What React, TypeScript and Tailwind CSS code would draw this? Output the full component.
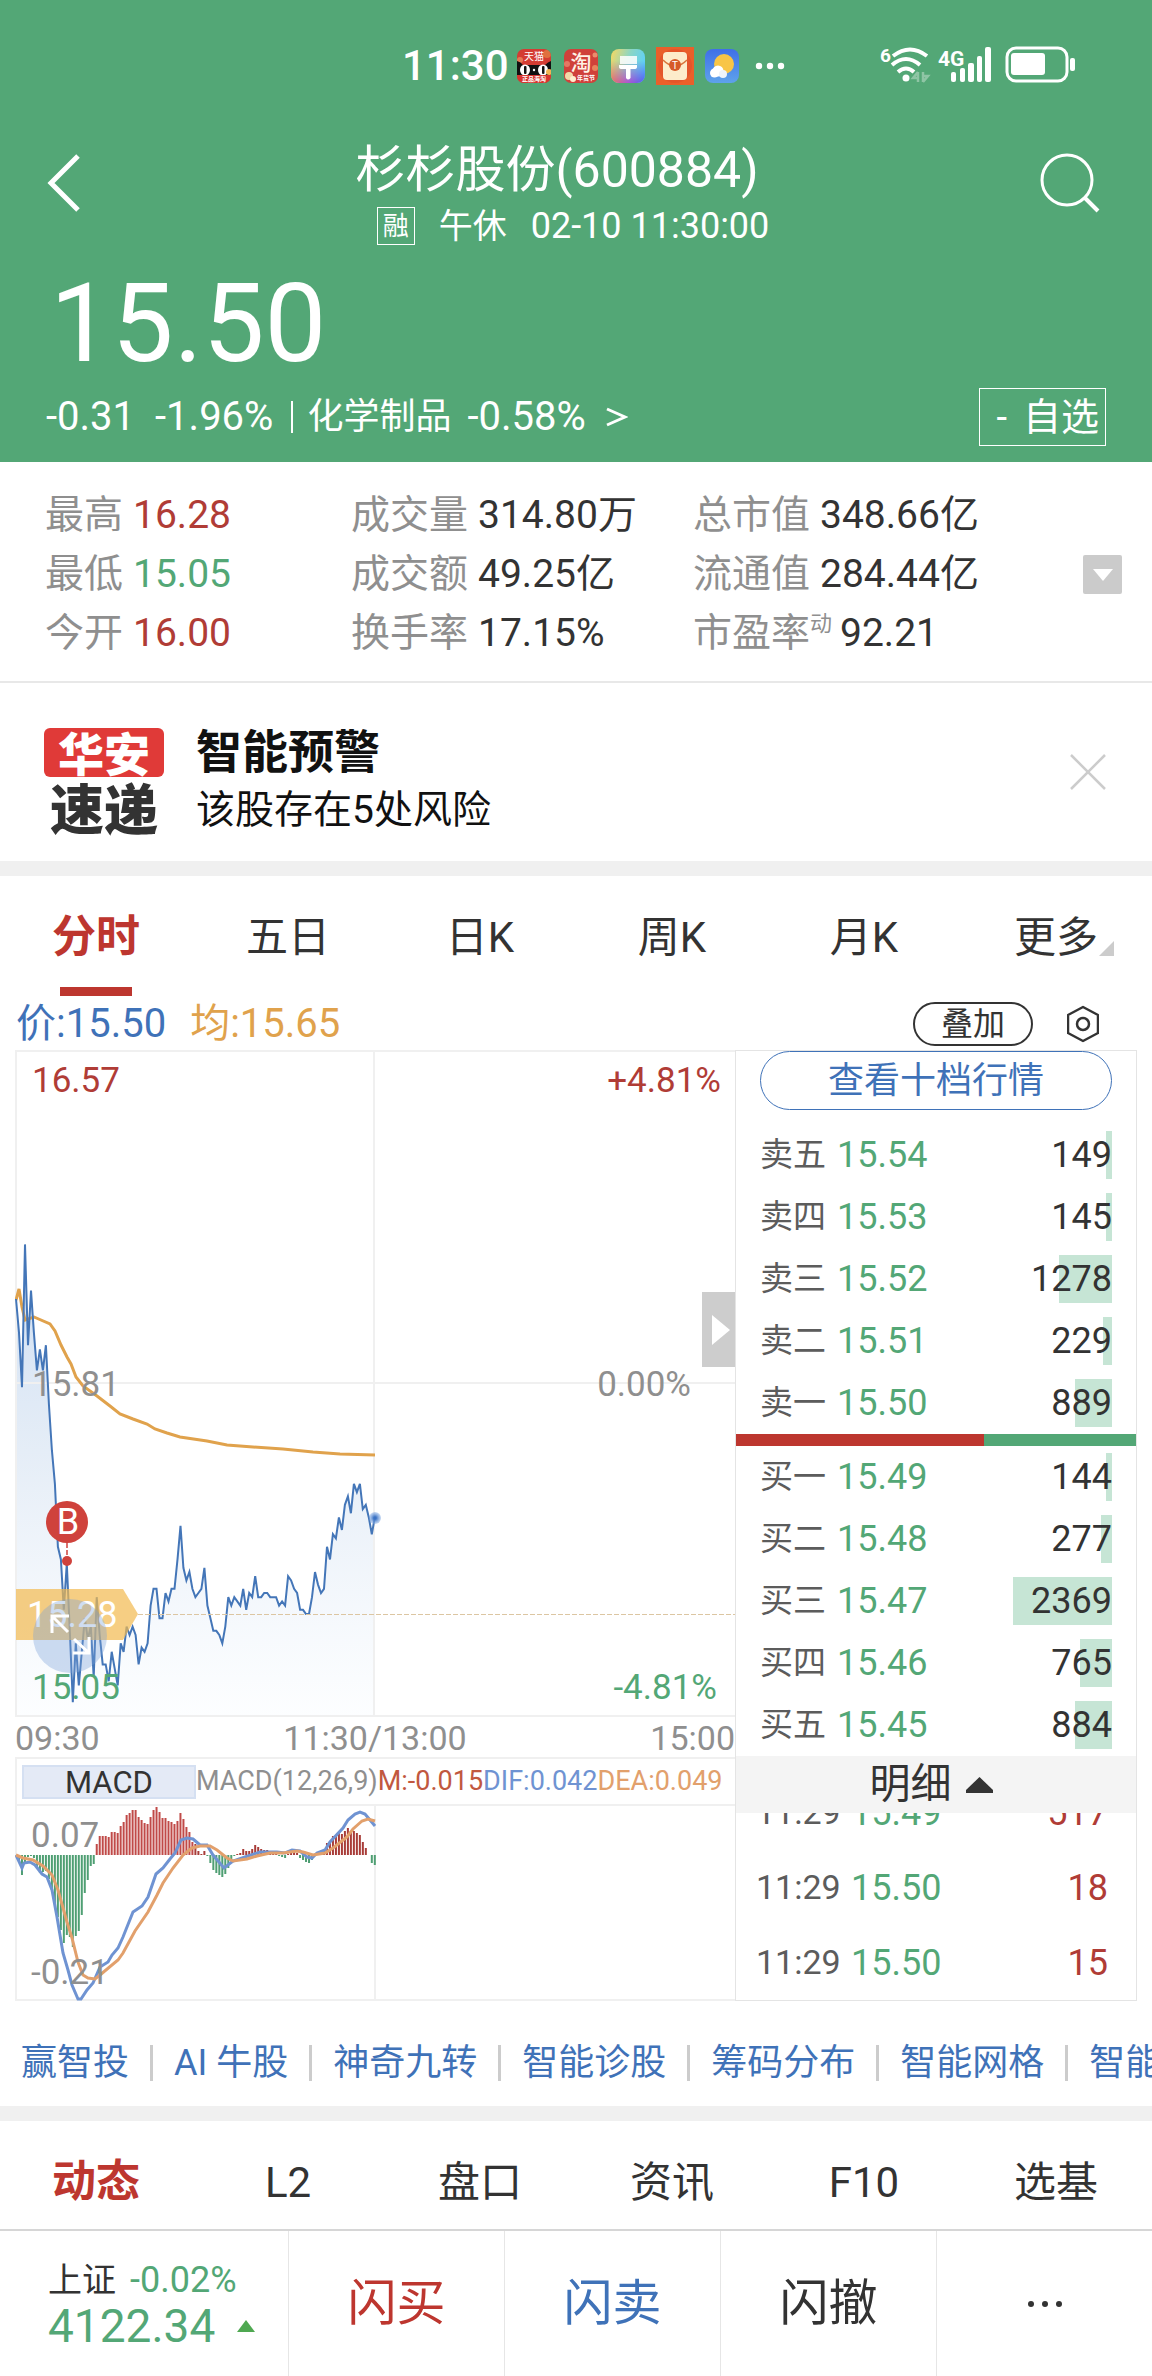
import type { FC, ReactNode } from 'react';

type Level = { label: string; price: string; qty: number; bar: number };

// one price per minute, in cents
const PRICES = [
  1601, 1593, 1580, 1614, 1590, 1603, 1593, 1584, 1589, 1584, 1590, 1576, 1565, 1557, 1542, 1539, 1527, 1538, 1522, 1505,
  1519, 1509, 1517, 1525, 1520, 1523, 1511, 1530, 1521, 1514, 1514, 1510, 1517, 1513, 1509, 1519, 1517, 1523, 1521, 1523,
  1521, 1514, 1518, 1517, 1519, 1528, 1532, 1532, 1525, 1525, 1531, 1529, 1532, 1532, 1539, 1547, 1537, 1534, 1536, 1532,
  1530, 1531, 1532, 1537, 1528, 1525, 1522, 1522, 1521, 1519, 1523, 1530, 1528, 1530, 1529, 1528, 1532, 1527, 1531, 1530,
  1535, 1530, 1530, 1531, 1531, 1530, 1530, 1530, 1528, 1529, 1528, 1535, 1534, 1532, 1531, 1527, 1527, 1526, 1526, 1530,
  1536, 1533, 1531, 1532, 1542, 1539, 1545, 1544, 1549, 1546, 1552, 1554, 1550, 1557, 1555, 1557, 1551, 1552, 1549, 1545,
  1549,
];

const AVERAGE =
  '1,250 4,239 7,257 10,270 19,267 35,274 40,281 46,295 52,307 56,314 61,327 68,336 82,346 95,356 105,364 118,369 132,374 140,379 152,383 165,387 192,391 212,395 238,397 268,399 298,402 325,404 360,405';

const HISTOGRAM = [
  0, -5, -20, -8, -2, -1, -3, -12, -18, -17, -16, -24, -35, -48, -62, -75, -88, -80, -82, -92, -81, -76, -60, -38, -25,
  -11, -9, 11, 19, 19, 19, 18, 23, 23, 22, 29, 33, 40, 42, 45, 45, 38, 35, 32, 31, 38, 45, 48, 43, 37, 37, 34, 33, 31,
  34, 42, 36, 28, 23, 13, 11, 4, 1, 4, -1, -8, -15, -18, -20, -22, -19, -13, -6, -1, 1, 2, 6, 4, 4, 6, 10, 8, 6, 5, 5,
  4, 3, 1, -1, -2, -3, 1, 3, 4, 2, -3, -5, -7, -8, -5, 0, 2, 3, 5, 12, 14, 19, 20, 23, 21, 24, 27, 24, 24, 22, 20, 13,
  7, 0, -8, -10,
];

const DIF =
  '1,49 7,62 9,57 15,56 20,59 27,68 32,71 37,84 42,111 48,147 53,164 57,179 63,193 66,193 72,184 78,177 85,161 93,156 97,149 103,142 108,131 118,106 127,100 133,91 141,68 148,62 155,53 160,47 166,34 172,32 178,33 185,39 192,39 198,49 209,62 218,55 230,51 245,46 262,46 270,47 277,44 285,45 292,51 297,52 302,47 310,44 315,36 328,22 333,14 340,8 345,6 350,8 355,14 360,20';

const DEA =
  '1,49 8,52 18,54 28,60 37,69 43,84 52,116 57,132 63,156 68,169 73,172 80,173 85,169 103,154 108,147 120,125 133,106 142,89 148,77 158,62 168,49 177,42 185,40 195,40 202,44 212,52 218,55 232,53 242,50 255,47 268,47 282,45 288,46 298,49 310,47 318,42 332,31 338,23 347,15 353,13 360,15';

const minuteX = (i: number) => 1 + i * 2.99;
const priceY = (cents: number) => 333 + (1581 - cents) * 4.2;
const PRICE_POINTS = PRICES.map((p, i) => `${minuteX(i).toFixed(1)},${priceY(p).toFixed(1)}`).join(' ');

const SELL: Level[] = [
  { label: '卖五', price: '15.54', qty: 149, bar: 6 },
  { label: '卖四', price: '15.53', qty: 145, bar: 6 },
  { label: '卖三', price: '15.52', qty: 1278, bar: 53 },
  { label: '卖二', price: '15.51', qty: 229, bar: 9 },
  { label: '卖一', price: '15.50', qty: 889, bar: 37 },
];

const BUY: Level[] = [
  { label: '买一', price: '15.49', qty: 144, bar: 6 },
  { label: '买二', price: '15.48', qty: 277, bar: 11 },
  { label: '买三', price: '15.47', qty: 2369, bar: 99 },
  { label: '买四', price: '15.46', qty: 765, bar: 32 },
  { label: '买五', price: '15.45', qty: 884, bar: 37 },
];

const TICKS = [
  { time: '11:29', price: '15.49', qty: 517 },
  { time: '11:29', price: '15.50', qty: 18 },
  { time: '11:29', price: '15.50', qty: 15 },
];

const LINKS = ['赢智投', 'AI 牛股', '神奇九转', '智能诊股', '筹码分布', '智能网格', '智能'];

const StatusBar: FC = () => (
  <div className="flex h-[132px] items-center pl-[402px] pr-[76px]">
    <span className="text-[42px] font-medium leading-[44px]">11:30</span>
    <div className="ml-2 flex items-center gap-[13px]">
      <svg className="size-[34px]" viewBox="0 0 34 34">
        <defs>
          <clipPath id="tm"><rect width="34" height="34" rx="7" /></clipPath>
        </defs>
        <g clipPath="url(#tm)">
          <rect width="34" height="34" fill="#d43c33" />
          <circle cx="30" cy="5" r="4" fill="#e0703f" />
          <circle cx="3" cy="11" r="3" fill="#e67a55" />
          <path d="M0 12 Q4 13 6 16 H28 Q31 13 34 12 V26 H0Z" fill="#111" />
          <ellipse cx="8" cy="21" rx="5" ry="5.5" fill="#fff" />
          <ellipse cx="26" cy="21" rx="5" ry="5.5" fill="#fff" />
          <rect x="7" y="17" width="2.5" height="8" rx="1" fill="#111" />
          <rect x="25" y="17" width="2.5" height="8" rx="1" fill="#111" />
          <circle cx="17" cy="21" r="1.2" fill="#fff" />
          <circle cx="32" cy="23" r="3" fill="#f2b452" />
          <rect y="26" width="34" height="8" fill="#d8352f" />
          <text x="17" y="11" fontSize="10" fill="#fff" textAnchor="middle">天猫</text>
          <text x="17" y="32" fontSize="6" fontWeight="700" fill="#fff" textAnchor="middle">正品海淘</text>
        </g>
      </svg>
      <svg className="size-[34px]" viewBox="0 0 34 34">
        <rect width="34" height="34" rx="7" fill="#d0413a" />
        <circle cx="3" cy="15" r="3" fill="#e57763" />
        <circle cx="31" cy="6" r="2.5" fill="#ea8d6c" />
        <circle cx="31" cy="19" r="3" fill="#e8835c" />
        <text x="17" y="21" fontSize="21" fontWeight="500" fill="#fff3e6" textAnchor="middle">淘</text>
        <circle cx="5" cy="27" r="4" fill="#f4d9a8" />
        <circle cx="9" cy="30" r="3" fill="#fff0cf" />
        <text x="22" y="31" fontSize="6" fontWeight="700" fill="#fff" textAnchor="middle">年货节</text>
      </svg>
      <svg className="size-[34px]" viewBox="0 0 34 34">
        <defs>
          <linearGradient id="br1" x1="0" y1="0.2" x2="1" y2="0.5">
            <stop offset="0" stopColor="#eed869" />
            <stop offset="0.5" stopColor="#8bd6c4" />
            <stop offset="1" stopColor="#5cd0fa" />
          </linearGradient>
          <linearGradient id="br2" x1="0" y1="0" x2="1" y2="0">
            <stop offset="0" stopColor="#ec6a62" />
            <stop offset="0.5" stopColor="#b054d0" />
            <stop offset="1" stopColor="#4f5cf2" />
          </linearGradient>
          <linearGradient id="br3" x1="0" y1="0" x2="0" y2="1">
            <stop offset="0.35" stopColor="#fff" stopOpacity="0" />
            <stop offset="1" stopColor="#fff" />
          </linearGradient>
          <mask id="brm"><rect width="34" height="34" fill="url(#br3)" /></mask>
        </defs>
        <rect width="34" height="34" rx="8" fill="url(#br1)" />
        <rect width="34" height="34" rx="8" fill="url(#br2)" mask="url(#brm)" />
        <path d="M9 7 H26 V15 H9Z" fill="#fff" opacity="0.85" />
        <path d="M8 16 H26 V18 Q26 20 23 20 H19.5 V29 Q17 32 15 29 V20 H11 Q8 20 8 18Z" fill="#fff" />
      </svg>
      <svg className="-mx-0.5 size-[38px]" viewBox="0 0 38 38">
        <rect width="38" height="38" fill="#ea5f2a" />
        <circle cx="19" cy="19" r="17" fill="#e4552a" />
        <rect x="7" y="5" width="24" height="28" rx="4" fill="#fdeccb" />
        <path d="M7 13 Q13 19 19 19 Q25 19 31 13" fill="none" stroke="#d9743a" strokeWidth="1.5" />
        <circle cx="19" cy="18" r="6" fill="#d65a28" />
        <text x="19" y="22" fontSize="10" fill="#fff" textAnchor="middle">T</text>
      </svg>
      <svg className="size-[34px]" viewBox="0 0 34 34">
        <defs>
          <linearGradient id="wt" x1="0" y1="0" x2="0" y2="1">
            <stop offset="0" stopColor="#3f6fe8" />
            <stop offset="1" stopColor="#5ea2ea" />
          </linearGradient>
        </defs>
        <rect width="34" height="34" rx="8" fill="url(#wt)" />
        <circle cx="19" cy="15" r="10" fill="#f8c546" />
        <circle cx="13" cy="22" r="5.5" fill="#fff" />
        <circle cx="9.5" cy="24" r="4.5" fill="#fff" />
        <circle cx="18" cy="25" r="4" fill="#eef4fb" />
      </svg>
      <svg className="h-2 w-[34px]" viewBox="0 0 34 8" fill="#fff">
        <circle cx="7" cy="4" r="3.2" />
        <circle cx="18" cy="4" r="3.2" />
        <circle cx="29" cy="4" r="3.2" />
      </svg>
    </div>
    <svg className="ml-auto h-10 w-[196px]" viewBox="0 0 196 40" fill="none" stroke="#fff">
      <text x="0" y="16" fontSize="19" fontWeight="700" fill="#fff" stroke="none">6</text>
      <path d="M13 10 Q30 -3 47 10" strokeWidth="4" />
      <path d="M12 19 Q26 7 40 19" strokeWidth="4" />
      <path d="M18 26 Q26 19 34 26" strokeWidth="4" />
      <circle cx="26" cy="32" r="3.5" fill="#fff" stroke="none" />
      <path d="M38 26 V36 M38 26 L33 32 H38 M43 36 V26 M43 36 L48 30 H43" strokeWidth="2.5" opacity="0.35" />
      <text x="58" y="20" fontSize="21" fontWeight="700" fill="#fff" stroke="none">4G</text>
      <g fill="#fff" stroke="none">
        <rect x="71" y="26" width="5" height="10" rx="2" />
        <rect x="80" y="22" width="5" height="14" rx="2" />
        <rect x="88" y="17" width="6" height="19" rx="2" />
        <rect x="97" y="10" width="5" height="26" rx="2" />
        <rect x="105" y="1" width="6" height="35" rx="2" />
        <rect x="131" y="7" width="34" height="22" rx="3" />
        <rect x="190" y="12" width="5" height="13" rx="2" />
      </g>
      <rect x="127" y="2" width="60" height="33" rx="9" strokeWidth="3" />
    </svg>
  </div>
);

const Header: FC = () => (
  <header className="bg-[#53a776] pb-4 text-white">
    <StatusBar />
    <div className="flex items-start justify-between pl-[46px] pr-[52px] pt-1.5">
      <button type="button" aria-label="返回" className="flex h-[90px] w-[60px] items-center">
        <svg className="h-[58px] w-9" viewBox="0 0 36 58" fill="none" stroke="currentColor" strokeWidth="5">
          <path d="M32 2 L5 29 L32 56" />
        </svg>
      </button>
      <div className="flex flex-col items-center">
        <h1 className="pr-8 pt-0.5 text-[50px] leading-[60px]">杉杉股份(600884)</h1>
        <div className="mt-1 flex items-center text-[36px] leading-[44px]">
          <span className="flex size-[38px] items-center justify-center border border-white text-[26px]">融</span>
          <span className="ml-6 text-[34px]">午休</span>
          <span className="ml-6">02-10 11:30:00</span>
        </div>
      </div>
      <button type="button" aria-label="搜索" className="flex h-[90px] w-[60px] items-center">
        <svg className="size-[60px]" viewBox="0 0 60 60" fill="none" stroke="currentColor" strokeWidth="3">
          <circle cx="27" cy="27" r="25" />
          <path d="M45 45 L58 58" strokeWidth="4" />
        </svg>
      </button>
    </div>
    <p className="mt-4 pl-[50px] text-[110px] leading-[120px]">15.50</p>
    <div className="mt-1 flex h-[58px] items-center justify-between px-[46px] text-[40px]">
      <a href="#sector" className="flex items-center">
        <span>-0.31</span>
        <span className="ml-5">-1.96%</span>
        <span className="ml-[18px] h-8 w-0.5 bg-white" />
        <span className="ml-3.5 text-[36px]">化学制品</span>
        <span className="ml-4">-0.58%</span>
        <svg className="ml-5 h-5 w-[22px]" viewBox="0 0 22 20" fill="none" stroke="currentColor" strokeWidth="3">
          <path d="M1 2 L19 10 L1 18" />
        </svg>
      </a>
      <button type="button" className="flex h-[58px] items-center gap-4 border border-white pl-4 pr-1.5 text-[38px]">
        <span>-</span>
        <span>自选</span>
      </button>
    </div>
  </header>
);

const Stat: FC<{ label: string; sup?: string; color?: string; children: ReactNode }> = ({ label, sup, color, children }) => (
  <div className="flex">
    <dt className="flex text-[#8f8f8f]">
      {label}
      {sup && <sup className="top-0 text-[22px] leading-[40px]">{sup}</sup>}
    </dt>
    <dd className={`${sup ? 'ml-2' : 'ml-2.5'} ${color ?? 'text-[#333]'}`}>{children}</dd>
  </div>
);

const Stats: FC = () => (
  <section className="flex items-center border-b-2 border-[#e8e8e8] pb-[18px] pl-[45px] pr-[30px] pt-6">
    <dl className="grid flex-1 grid-cols-[306fr_342fr_390fr] text-[39px] leading-[59px]">
      <Stat label="最高" color="text-[#b03c36]">16.28</Stat>
      <Stat label="成交量">314.80万</Stat>
      <Stat label="总市值">348.66亿</Stat>
      <Stat label="最低" color="text-[#53a776]">15.05</Stat>
      <Stat label="成交额">49.25亿</Stat>
      <Stat label="流通值">284.44亿</Stat>
      <Stat label="今开" color="text-[#b03c36]">16.00</Stat>
      <Stat label="换手率">17.15%</Stat>
      <Stat label="市盈率" sup="动">92.21</Stat>
    </dl>
    <button type="button" aria-label="展开" className="flex size-[39px] items-center justify-center rounded-xs bg-[#cbcbcb]">
      <svg className="h-3 w-5" viewBox="0 0 20 12" fill="#fff">
        <path d="M0 0 H20 L10 12Z" />
      </svg>
    </button>
  </section>
);

const Notice: FC = () => (
  <section className="flex items-center pb-[22px] pl-11 pr-[46px] pt-10">
    <div className="flex w-[120px] flex-col items-center font-black text-[#333]">
      <span className="h-[49px] w-full rounded-md bg-[#e03a38] text-center text-[46px] leading-[54px] text-white">华安</span>
      <span className="mt-2 h-[49px] text-[54px] leading-[54px]">速递</span>
    </div>
    <div className="ml-8 flex-1 text-[39px] leading-[58px] text-[#111]">
      <h2 className="text-[46px] font-bold">智能预警</h2>
      <p>该股存在5处风险</p>
    </div>
    <button type="button" aria-label="关闭" className="flex h-[98px] items-center self-start">
      <svg className="size-9" viewBox="0 0 36 36" stroke="#ccc" strokeWidth="2.5">
        <path d="M1 1 L35 35 M35 1 L1 35" />
      </svg>
    </button>
  </section>
);

const PeriodTabs: FC = () => (
  <nav className="grid h-[120px] grid-cols-6 text-[42px] text-[#333]">
    <button type="button" className="relative pt-0.5 text-[44px] font-bold text-[#bd362f]">
      分时
      <span className="absolute bottom-0 left-1/2 h-[9px] w-[72px] -translate-x-1/2 bg-[#bd362f]" />
    </button>
    {['五日', '日K', '周K', '月K'].map((t) => (
      <button type="button" key={t} className="pt-0.5">{t}</button>
    ))}
    <button type="button" className="relative pt-0.5">
      更多
      <svg className="absolute right-[38px] top-[65px] size-[15px]" viewBox="0 0 15 15" fill="#ccc">
        <path d="M15 0 V15 H0Z" />
      </svg>
    </button>
  </nav>
);

const PriceLegend: FC = () => (
  <div className="flex h-[54px] items-center pl-4 pr-[53px] pt-0.5 text-[40px]">
    <span className="text-[#3f72b8]">价:15.50</span>
    <span className="ml-6 text-[#e0a24c]">均:15.65</span>
    <button type="button" className="ml-auto h-11 w-[120px] rounded-full border-2 border-[#333] text-[32px] leading-none text-[#333]">叠加</button>
    <button type="button" aria-label="设置" className="ml-[34px]">
      <svg className="h-[38px] w-8" viewBox="0 0 32 38" fill="none" stroke="#333" strokeWidth="2.5" strokeLinejoin="round">
        <path d="M16 2 L31 10 V28 L16 36 L1 28 V10Z" />
        <circle cx="16" cy="19" r="6" />
      </svg>
    </button>
  </div>
);

const PriceChart: FC = () => (
  <div className="relative h-[667px]">
    <svg className="block h-full w-full" viewBox="0 0 720 667" preserveAspectRatio="none">
      <defs>
        <linearGradient id="area" x1="0" y1="0" x2="0" y2="1">
          <stop offset="0" stopColor="#c9dbf1" stopOpacity="0.9" />
          <stop offset="0.45" stopColor="#dfe9f5" stopOpacity="0.8" />
          <stop offset="1" stopColor="#fbfdff" stopOpacity="0.6" />
        </linearGradient>
        <radialGradient id="glow">
          <stop offset="0.2" stopColor="#3a72c4" />
          <stop offset="1" stopColor="#8db2e6" stopOpacity="0.5" />
        </radialGradient>
      </defs>
      <polygon points={`1,665 ${PRICE_POINTS} 360,665`} fill="url(#area)" />
      <g stroke="#f0f0f0" strokeWidth="2" fill="none">
        <path d="M0 1 H720 M0 333 H720 M0 666 H720 M1 0 V667 M359 0 V667" />
      </g>
      <polyline points={AVERAGE} fill="none" stroke="#e0a24c" strokeWidth="3" />
      <polyline points={PRICE_POINTS} fill="none" stroke="#4476b8" strokeWidth="2" />
      <circle cx="360" cy="468" r="6" fill="url(#glow)" />
      <path d="M123 564.5 H720" stroke="#dcc6a2" strokeWidth="1" strokeDasharray="5 2" />
      <path d="M1 539 H108 L123 564 L108 590 H1Z" fill="#f2b94f" opacity="0.7" />
      <text x="12" y="577" fontSize="36" fill="#fff">15.28</text>
      <circle cx="55" cy="586" r="37" fill="#7ba0d8" opacity="0.36" />
      <g stroke="#fff" strokeWidth="3" fill="none">
        <path d="M54 566 H37 V583 M37 566 L53 582" />
        <path d="M58 603 H74 V587 M74 603 L59 589" />
      </g>
      <path d="M52 493 V508" stroke="#cf423c" strokeWidth="1.5" strokeDasharray="5 2" />
      <circle cx="52" cy="511" r="5" fill="#cf423c" />
      <circle cx="52" cy="472" r="21" fill="#cf423c" />
      <text x="53" y="484" fontSize="36" fill="#fff" textAnchor="middle">B</text>
    </svg>
    <div className="absolute inset-0 flex flex-col justify-between pb-[9px] pl-[17px] pr-3.5 pt-[11px] text-[35px] leading-10">
      <div className="flex justify-between text-[#b03c36]">
        <span>16.57</span>
        <span>+4.81%</span>
      </div>
      <div className="flex justify-between pr-[30px] text-[#8f8f8f]">
        <span>15.81</span>
        <span>0.00%</span>
      </div>
      <div className="flex justify-between pr-1 text-[#53a776]">
        <span>15.05</span>
        <span>-4.81%</span>
      </div>
    </div>
    <button type="button" aria-label="收起盘口" className="absolute right-0 top-[242px] flex h-[75px] w-[33px] items-center justify-center bg-[#cdcdcd] pl-1">
      <svg className="h-[30px] w-[18px]" viewBox="0 0 18 30" fill="#fff">
        <path d="M0 0 L18 15 L0 30Z" />
      </svg>
    </button>
  </div>
);

const MacdChart: FC = () => (
  <>
    <div className="flex h-[49px] items-center border-y-2 border-l-2 border-[#f0f0f0] pl-[5px] text-[27px] leading-none">
      <button type="button" className="h-[34px] w-[174px] border-2 border-[#d5e0f2] bg-[#e4eaf6] text-[31px] leading-none text-[#333]">MACD</button>
      <span className="text-[#8f8f8f]">MACD(12,26,9)</span>
      <span className="text-[#c1583f]">M:-0.015</span>
      <span className="text-[#6f93d2]">DIF:0.042</span>
      <span className="text-[#e2a06c]">DEA:0.049</span>
    </div>
    <div className="relative h-[195px]">
      <svg className="block h-full w-full" viewBox="0 0 720 195" preserveAspectRatio="none">
        <path d="M1 0 V195 M360 0 V195 M0 194 H720" stroke="#f0f0f0" strokeWidth="2" fill="none" />
        {HISTOGRAM.map((v, i) => (
          <rect
            key={i}
            x={minuteX(i) - 1}
            y={v > 0 ? 49 - v : 49}
            width="2"
            height={Math.abs(v)}
            fill={v < 0 ? '#4f9f73' : i < 60 ? '#c04a48' : '#a83c38'}
          />
        ))}
        <polyline points={DIF} fill="none" stroke="#6f93d2" strokeWidth="3" />
        <polyline points={DEA} fill="none" stroke="#e2a06c" strokeWidth="3" />
      </svg>
      <div className="absolute inset-0 flex flex-col justify-between pb-2 pl-4 pt-2.5 text-[35px] leading-10 text-[#8f8f8f]">
        <span>0.07</span>
        <span>-0.21</span>
      </div>
    </div>
  </>
);

const BookTable: FC<{ levels: Level[] }> = ({ levels }) => (
  <table className="w-full text-[36px] leading-[48px]">
    <tbody>
      {levels.map((l) => (
        <tr key={l.label} className="h-[62px]">
          <th scope="row" className="w-[101px] pl-6 text-left text-[33px] font-normal text-[#5c5c5c]">{l.label}</th>
          <td className="text-[#53a776]">{l.price}</td>
          <td className="pr-6 text-right text-[#333]">
            <div className="relative">
              <span className="absolute inset-y-0 right-0 bg-[#c6e5d5]" style={{ width: l.bar }} />
              <span className="relative">{l.qty}</span>
            </div>
          </td>
        </tr>
      ))}
    </tbody>
  </table>
);

const OrderBook: FC = () => (
  <aside className="flex w-[402px] flex-col border border-[#e4e4e4]">
    <button type="button" className="mx-6 h-[59px] rounded-full border border-[#3f72b8] text-[36px] text-[#3f72b8]">查看十档行情</button>
    <div className="mt-3.5">
      <BookTable levels={SELL} />
    </div>
    <div className="flex h-3">
      <span className="w-[62%] bg-[#bd362f]" />
      <span className="flex-1 bg-[#53a776]" />
    </div>
    <BookTable levels={BUY} />
    <button type="button" className="flex h-[57px] shrink-0 items-center justify-center gap-3.5 bg-[#f4f4f4] pr-2.5 text-[41px] text-[#333]">
      明细
      <svg className="h-4 w-[27px]" viewBox="0 0 27 16" fill="#333">
        <path d="M13.5 0 L27 13 V16 H0 V13Z" />
      </svg>
    </button>
    <div className="flex h-0 grow flex-col justify-end overflow-hidden">
      <table className="w-full text-[36px]">
        <tbody>
          {TICKS.map((t, i) => (
            <tr key={i} className="h-[75px]">
              <td className="w-[115px] pl-5 text-[34px] text-[#5c5c5c]">{t.time}</td>
              <td className="text-[#53a776]">{t.price}</td>
              <td className="pr-7 text-right text-[#b03c36]">{t.qty}</td>
            </tr>
          ))}
        </tbody>
      </table>
    </div>
  </aside>
);

const QuickLinks: FC = () => (
  <nav className="flex h-[105px] items-center gap-[21px] overflow-hidden whitespace-nowrap pl-[21px] pt-[18px] text-[36px] text-[#3f72b8]">
    {LINKS.map((l, i) => (
      <div key={l} className="flex shrink-0 items-center gap-[21px]">
        {i > 0 && <span className="h-9 w-[3px] bg-[#ccc]" />}
        <a href={`#${i}`}>{l}</a>
      </div>
    ))}
  </nav>
);

const InfoTabs: FC = () => (
  <nav className="grid h-[108px] grid-cols-6 pt-3.5 text-[42px] text-[#333]">
    <button type="button" className="text-[44px] font-bold text-[#bd362f]">动态</button>
    {['L2', '盘口', '资讯', 'F10', '选基'].map((t) => (
      <button type="button" key={t}>{t}</button>
    ))}
  </nav>
);

const TradeBar: FC = () => (
  <footer className="grid h-[147px] grid-cols-[4fr_3fr_3fr_3fr_3fr] border-t-2 border-[#d6d6d6] text-[49px] text-[#333]">
    <div className="pl-12 pt-7 text-[#53a776]">
      <div className="flex gap-3.5 text-[34px] leading-[42px]">
        <span className="text-[#333]">上证</span>
        <span className="text-[36px]">-0.02%</span>
      </div>
      <div className="flex items-center gap-[22px] text-[46px] leading-[50px]">
        4122.34
        <svg className="h-3 w-[18px]" viewBox="0 0 18 12" fill="#4fa851">
          <path d="M9 0 L18 12 H0Z" />
        </svg>
      </div>
    </div>
    <button type="button" className="border-l border-[#e6e6e6] text-[#bd362f]">闪买</button>
    <button type="button" className="border-l border-[#e6e6e6] text-[#3f72b8]">闪卖</button>
    <button type="button" className="border-l border-[#e6e6e6]">闪撤</button>
    <button type="button" aria-label="更多" className="flex items-center justify-center border-l border-[#e6e6e6]">
      <svg className="h-1.5 w-9" viewBox="0 0 36 6" fill="#333">
        <circle cx="4" cy="3" r="3" />
        <circle cx="18" cy="3" r="3" />
        <circle cx="32" cy="3" r="3" />
      </svg>
    </button>
  </footer>
);

export default function App() {
  return (
    <div className="bg-white font-['Roboto','Noto_Sans_CJK_SC',sans-serif]">
      <Header />
      <Stats />
      <Notice />
      <div className="h-[15px] bg-[#f0f0f0]" />
      <PeriodTabs />
      <PriceLegend />
      <main className="mx-[15px] flex">
        <div className="min-w-0 flex-1">
          <PriceChart />
          <div className="flex h-10 items-center justify-between pt-0.5 text-[34px] leading-none text-[#8f8f8f]">
            <span>09:30</span>
            <span>11:30/13:00</span>
            <span>15:00</span>
          </div>
          <MacdChart />
        </div>
        <OrderBook />
      </main>
      <QuickLinks />
      <div className="h-[15px] bg-[#f0f0f0]" />
      <InfoTabs />
      <TradeBar />
    </div>
  );
}
